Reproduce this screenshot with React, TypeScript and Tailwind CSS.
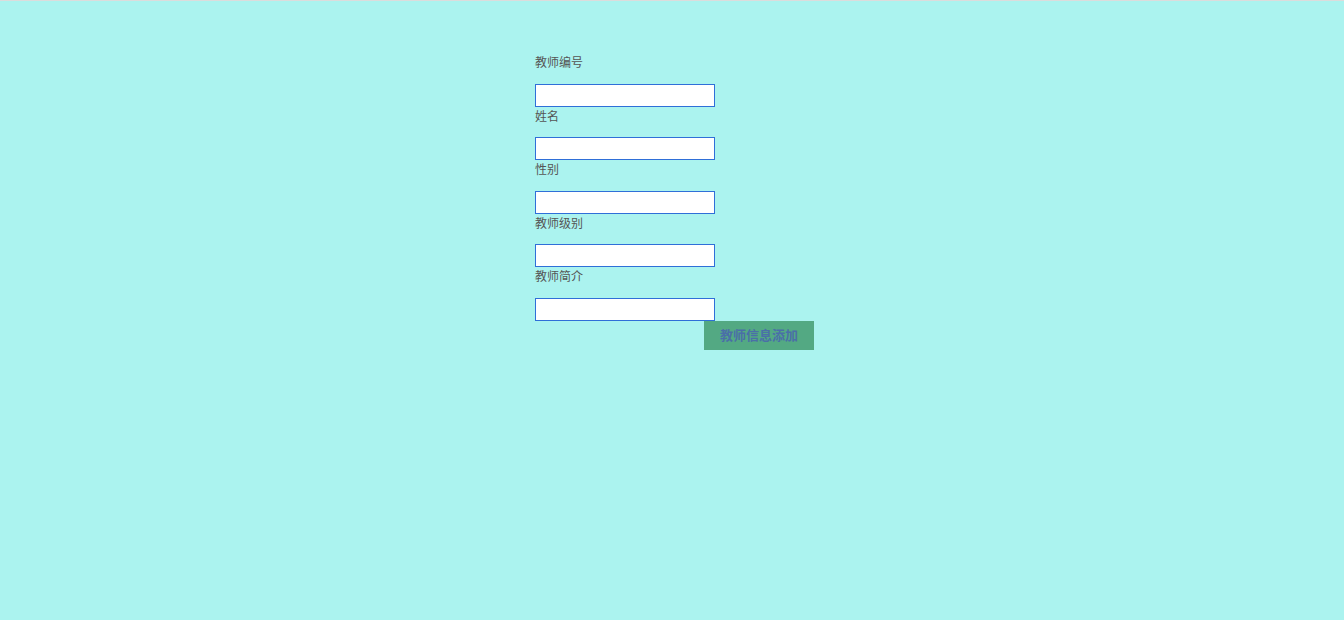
import React from 'react';

const FIELDS = ['教师编号', '姓名', '性别', '教师级别', '教师简介'];

export default function App() {
  return (
    <div
      className="min-h-[620px] w-full bg-[#abf3ef] border-t border-[#dcdcdc]"
      style={{ fontFamily: '"Noto Sans CJK SC", "Noto Sans", sans-serif' }}
    >
      <form className="ml-[535px] pt-[52px] flex flex-col items-start">
        {FIELDS.map(label => (
          <div key={label} className="flex flex-col items-start">
            <label className="block text-[12px] leading-[16px] text-[#555] mt-[1px] mb-[13.5px]">{label}</label>
            <input
              type="text"
              className="w-[180px] h-[23px] bg-white border border-[#2f6fd8] outline-none px-1 text-[12px]"
            />
          </div>
        ))}
        <button
          type="button"
          className="ml-[169px] w-[110px] h-[29px] bg-[#53a983] text-[#4a6fa8] text-[13px] font-bold"
        >
          教师信息添加
        </button>
      </form>
    </div>
  );
}
